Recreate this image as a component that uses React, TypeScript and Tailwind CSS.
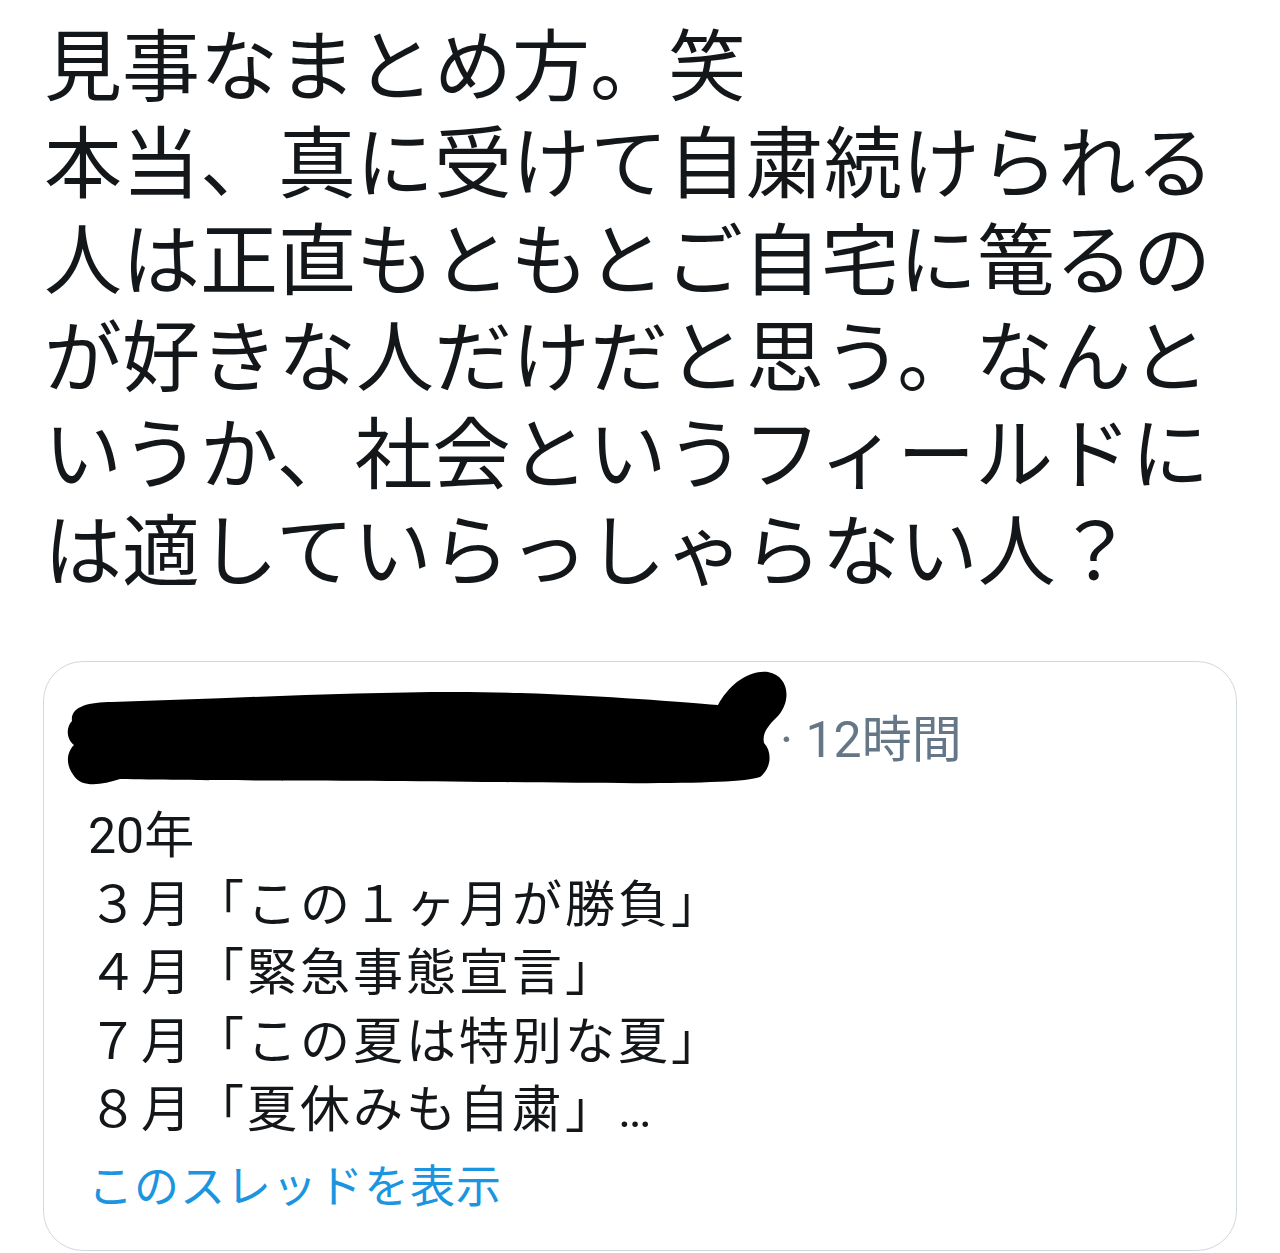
const lines = [
  "見事なまとめ方。笑",
  "本当、真に受けて自粛続けられる",
  "人は正直もともとご自宅に篭るの",
  "が好きな人だけだと思う。なんと",
  "いうか、社会というフィールドに",
  "は適していらっしゃらない人？",
];

const quoteLines = [
  "３月「この１ヶ月が勝負」",
  "４月「緊急事態宣言」",
  "７月「この夏は特別な夏」",
  "８月「夏休みも自粛」…",
];

const Redaction = () => (
  <svg
    width="740"
    height="125"
    viewBox="60 660 740 125"
    className="shrink-0"
    aria-hidden="true"
  >
    <path
      fill="#000"
      d="M 72 716 C 70 702, 88 697, 112 697 C 250 693, 400 684, 520 688 C 610 691, 680 697, 718 700 C 728 682, 746 665, 768 667 C 790 671, 792 698, 776 713 C 768 721, 762 728, 764 738 C 772 746, 772 763, 760 772 C 740 779, 650 779, 500 777 C 350 775, 200 776, 120 774 C 102 780, 82 783, 74 771 C 64 758, 68 746, 74 740 C 66 734, 66 722, 72 716 Z"
    />
  </svg>
);

export default function App() {
  return (
    <div
      className="w-[1280px] h-[1253px] bg-white overflow-hidden pl-[44px] pr-[43px] pt-[20px]"
      style={{ fontFamily: 'Roboto, "Noto Sans CJK JP", sans-serif' }}
    >
      <div className="text-[78px] leading-[97px] tracking-[0px] text-[#14171a]">
        {lines.map((l) => (
          <div key={l} className="whitespace-nowrap">
            {l}
          </div>
        ))}
      </div>

      <div className="mt-[59px] -ml-[1px] h-[590px] rounded-[40px] border border-[#cfd9de] pl-[44px] pt-[3px]">
        <div className="flex -ml-[28px]">
          <Redaction />
          <span className="-ml-[20px] mt-[45px] text-[50px] leading-[60px] text-[#657786]">
            · 12時間
          </span>
        </div>

        <div className="mt-[12px] text-[50px] leading-[68.5px] text-[#14171a]">
          <div>20年</div>
          {quoteLines.map((l) => (
            <div key={l} className="whitespace-nowrap tracking-[3px]">
              {l}
            </div>
          ))}
          <div className="mt-[9px] text-[45px] tracking-[1px] text-[#1b95e0]">
            このスレッドを表示
          </div>
        </div>
      </div>
    </div>
  );
}
